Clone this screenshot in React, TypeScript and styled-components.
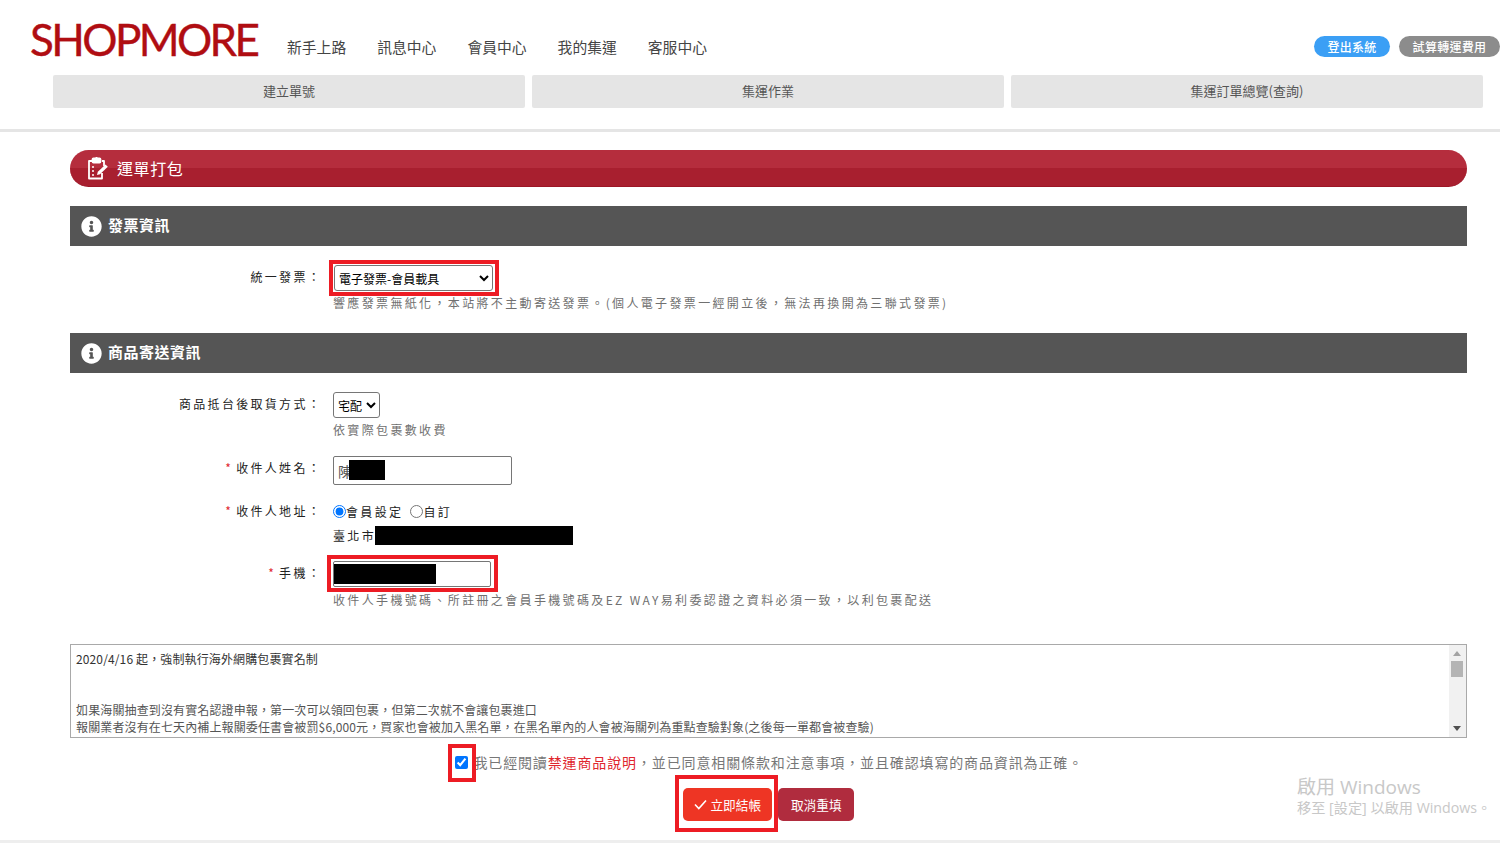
import React from "react";
import styled, { createGlobalStyle } from "styled-components";
import { FaInfoCircle } from "react-icons/fa";

const CJK = `"Noto Sans CJK TC", "Liberation Sans", sans-serif`;

const GlobalStyle = createGlobalStyle`
  html, body {
    margin: 0;
    background: #fff;
    overflow: hidden;
  }
  body {
    font-family: ${CJK};
  }
  * {
    box-sizing: border-box;
  }
`;

const navItems = ["新手上路", "訊息中心", "會員中心", "我的集運", "客服中心"];
const tabs = ["建立單號", "集運作業", "集運訂單總覽(查詢)"];

const ClipboardIcon = () => (
  <svg width="22" height="24" viewBox="0 0 22 24" fill="none" stroke="#fff" strokeWidth="1.8">
    <path d="M15 5H17V10M15 17V22.5H2V5H5" strokeLinejoin="round" />
    <rect x="5.5" y="2.5" width="8" height="4" rx="1" fill="#fff" />
    <path d="M9.5 1V3" />
    <path d="M5 11H7M5 15H7M5 19H7" strokeWidth="1.3" />
    <path d="M10 19L10.8 15.8L18.5 8.5L20.8 10.8L13 18.2Z" fill="#fff" stroke="none" />
  </svg>
);

const CheckIcon = () => (
  <svg width="13" height="11" viewBox="0 0 13 11" fill="none" stroke="#fff" strokeWidth="1.6">
    <path d="M1 5.5L4.8 9.5L12 1.5" />
  </svg>
);

export default function App() {
  return (
    <Page>
      <GlobalStyle />
      <Header>
        <TopRow>
          <Logo>SHOPMORE</Logo>
          <Nav>
            {navItems.map((item) => (
              <NavLink key={item}>{item}</NavLink>
            ))}
          </Nav>
          <Pills>
            <Pill $color="#3b9ff5" $width={76}>登出系統</Pill>
            <Pill $color="#8c8c8c" $width={101}>試算轉運費用</Pill>
          </Pills>
        </TopRow>
        <Tabs>
          {tabs.map((tab) => (
            <Tab key={tab}>{tab}</Tab>
          ))}
        </Tabs>
      </Header>

      <Content>
        <TitleBar>
          <ClipboardIcon />
          <TitleText>運單打包</TitleText>
        </TitleBar>

        <SectionHeader>
          <FaInfoCircle size={21} color="#fff" />
          <SectionTitle>發票資訊</SectionTitle>
        </SectionHeader>
        <Form $after={21}>
          <Row>
            <Label>統一發票：</Label>
            <Field>
              <InvoiceMark $inset="-5px -6px -5px -5px">
                <Select $width={159} defaultValue="member">
                  <option value="member">電子發票-會員載具</option>
                </Select>
              </InvoiceMark>
              <Hint>響應發票無紙化，本站將不主動寄送發票。(個人電子發票一經開立後，無法再換開為三聯式發票)</Hint>
            </Field>
          </Row>
        </Form>

        <SectionHeader>
          <FaInfoCircle size={21} color="#fff" />
          <SectionTitle>商品寄送資訊</SectionTitle>
        </SectionHeader>
        <Form $after={0}>
          <Row>
            <Label>商品抵台後取貨方式：</Label>
            <Field>
              <Select $width={47} defaultValue="home">
                <option value="home">宅配</option>
              </Select>
              <Hint>依實際包裹數收費</Hint>
            </Field>
          </Row>
          <Row>
            <Label><Required>*</Required>收件人姓名：</Label>
            <Field>
              <InputWrap>
                <TextInput $width={179} $height={29} defaultValue="陳" />
                <Redacted $left={16} $top={4} $width={36} $height={20} />
              </InputWrap>
            </Field>
          </Row>
          <Row>
            <Label $flush><Required>*</Required>收件人地址：</Label>
            <Field>
              <RadioRow>
                <RadioLabel><input type="radio" name="addr" defaultChecked />會員設定</RadioLabel>
                <RadioLabel><input type="radio" name="addr" />自訂</RadioLabel>
              </RadioRow>
              <Address>
                臺北市<AddressBlock />
              </Address>
            </Field>
          </Row>
          <Row>
            <Label><Required>*</Required>手機：</Label>
            <Field>
              <Highlight $inset="-6px -7px -5px -6px">
                <InputWrap>
                  <TextInput $width={158} $height={26} defaultValue="" />
                  <Redacted $left={1} $top={3} $width={102} $height={20} />
                </InputWrap>
              </Highlight>
              <PhoneHint>收件人手機號碼、所註冊之會員手機號碼及EZ WAY易利委認證之資料必須一致，以利包裹配送</PhoneHint>
            </Field>
          </Row>
        </Form>

        <Notice>
          <NoticeText>
            <p>2020/4/16 起，強制執行海外網購包裹實名制</p>
            <p>&nbsp;</p>
            <p>&nbsp;</p>
            <p>如果海關抽查到沒有實名認證申報，第一次可以領回包裹，但第二次就不會讓包裹進口</p>
            <p>報關業者沒有在七天內補上報關委任書會被罰$6,000元，買家也會被加入黑名單，在黑名單內的人會被海關列為重點查驗對象(之後每一單都會被查驗)</p>
          </NoticeText>
          <Scrollbar>
            <ArrowUp />
            <Thumb />
            <ArrowDown />
          </Scrollbar>
        </Notice>

        <Agreement>
          <Highlight $inset="-12px -8px -13px -7px">
            <Checkbox type="checkbox" defaultChecked />
          </Highlight>
          <AgreementText>
            我已經閱讀<RedLink>禁運商品說明</RedLink>，並已同意相關條款和注意事項，並且確認填寫的商品資訊為正確。
          </AgreementText>
        </Agreement>

        <Actions>
          <Highlight $inset="-13px -6px -11px -8px">
            <ActionButton $color="#ee3524" $width={89}>
              <CheckIcon />
              立即結帳
            </ActionButton>
          </Highlight>
          <ActionButton $color="#b02c3e" $width={76}>取消重填</ActionButton>
        </Actions>
      </Content>

      <Watermark>
        <WatermarkTitle>啟用 Windows</WatermarkTitle>
        <WatermarkSub>移至 [設定] 以啟用 Windows。</WatermarkSub>
      </Watermark>
    </Page>
  );
}

const Page = styled.div`
  position: relative;
  width: 1500px;
  height: 843px;
  overflow: hidden;
  border-bottom: 3px solid #eeeeee;
`;

const Header = styled.header`
  height: 132px;
  border-bottom: 3px solid #e5e5e5;
`;

const TopRow = styled.div`
  display: flex;
  align-items: flex-start;
  height: 75px;
  padding-left: 30px;
`;

const Logo = styled.div`
  width: 229px;
  margin-top: 12px;
  font-family: "Lato", "Liberation Sans", sans-serif;
  font-size: 44px;
  line-height: 54px;
  letter-spacing: -2.6px;
  color: #b00d12;
  -webkit-text-stroke: 0.4px #b00d12;
  white-space: nowrap;
`;

const Nav = styled.nav`
  display: flex;
  gap: 31px;
  margin: 36px 0 0 28px;
`;

const NavLink = styled.a`
  font-size: 14.8px;
  line-height: 22px;
  color: #444;
`;

const Pills = styled.div`
  display: flex;
  gap: 9px;
  margin: 36px 0 0 auto;
`;

const Pill = styled.a<{ $color: string; $width: number }>`
  display: flex;
  align-items: center;
  justify-content: center;
  width: ${(p) => p.$width}px;
  height: 21px;
  border-radius: 11px;
  background: ${(p) => p.$color};
  color: #fff;
  font-size: 12px;
  font-weight: 500;
  letter-spacing: 0.3px;
`;

const Tabs = styled.div`
  display: grid;
  grid-template-columns: repeat(3, 1fr);
  gap: 7px;
  padding: 0 17px 0 53px;
`;

const Tab = styled.a`
  display: flex;
  align-items: center;
  justify-content: center;
  height: 33px;
  padding-bottom: 2px;
  border-radius: 2px;
  background: #e5e5e5;
  color: #555;
  font-size: 13px;
`;

const Content = styled.main`
  padding: 18px 33.5px 0 70px;
`;

const TitleBar = styled.div`
  display: flex;
  align-items: center;
  gap: 8px;
  height: 37px;
  margin-bottom: 19px;
  padding-left: 17px;
  border-radius: 19px;
  background: linear-gradient(#b52d3d 0 50%, #a81f2f 50% 100%);
  border-bottom: 1px solid #9c1626;
`;

const TitleText = styled.h1`
  margin: 0;
  font-size: 16px;
  font-weight: 400;
  letter-spacing: 0.6px;
  color: #fff;
`;

const SectionHeader = styled.div`
  display: flex;
  align-items: center;
  gap: 6px;
  height: 40px;
  padding-left: 11px;
  background: #555;
`;

const SectionTitle = styled.h2`
  margin: 0 0 4px;
  font-size: 15px;
  font-weight: 700;
  letter-spacing: 0.5px;
  color: #fff;
`;

const Form = styled.div<{ $after: number }>`
  display: flex;
  flex-direction: column;
  gap: 17px;
  padding: 19px 0 ${(p) => p.$after}px;
`;

const Row = styled.div`
  display: grid;
  grid-template-columns: 263px 1fr;
  align-items: start;
`;

const Label = styled.label<{ $flush?: boolean }>`
  padding: ${(p) => (p.$flush ? 0 : 3)}px 11px 0 0;
  text-align: right;
  font-size: 12px;
  line-height: 18px;
  letter-spacing: 2.3px;
  color: #222;
`;

const Required = styled.span`
  margin-right: 3px;
  color: #e0282e;
`;

const Field = styled.div`
  display: flex;
  flex-direction: column;
  align-items: flex-start;
`;

const Highlight = styled.div<{ $inset: string }>`
  position: relative;
  display: inline-flex;
  &::after {
    content: "";
    position: absolute;
    inset: ${(p) => p.$inset};
    border: 4px solid #ed1c24;
    pointer-events: none;
  }
`;

const InvoiceMark = styled(Highlight)`
  margin-left: 1px;
`;

const Select = styled.select<{ $width: number }>`
  width: ${(p) => p.$width}px;
  height: 26px;
  padding: 0;
  border: 1px solid #767676;
  border-radius: 3px;
  background: #fff;
  color: #000;
  font-family: ${CJK};
  font-size: 12px;
`;

const Hint = styled.p`
  margin: 3px 0 0;
  font-size: 12px;
  line-height: 18px;
  letter-spacing: 2.35px;
  color: #707070;
  white-space: nowrap;
`;

const PhoneHint = styled(Hint)`
  margin-top: 4px;
`;

const InputWrap = styled.div`
  position: relative;
  display: inline-flex;
`;

const TextInput = styled.input<{ $width: number; $height: number }>`
  width: ${(p) => p.$width}px;
  height: ${(p) => p.$height}px;
  padding: 0 4px;
  border: 1px solid #767676;
  border-radius: 2px;
  font-family: ${CJK};
  font-size: 14px;
  color: #555;
  outline: none;
`;

const Redacted = styled.span<{ $left: number; $top: number; $width: number; $height: number }>`
  position: absolute;
  left: ${(p) => p.$left}px;
  top: ${(p) => p.$top}px;
  width: ${(p) => p.$width}px;
  height: ${(p) => p.$height}px;
  background: #000;
`;

const RadioRow = styled.div`
  display: flex;
  gap: 7px;
  height: 18px;
  align-items: center;
`;

const RadioLabel = styled.label`
  display: flex;
  align-items: center;
  font-size: 12px;
  letter-spacing: 2.35px;
  color: #222;
  input {
    margin: 0;
    width: 13px;
    height: 13px;
  }
`;

const Address = styled.div`
  display: flex;
  align-items: center;
  height: 18px;
  margin-top: 6px;
  font-size: 12px;
  letter-spacing: 2.35px;
  color: #222;
`;

const AddressBlock = styled.span`
  width: 198px;
  height: 19px;
  margin-left: -1px;
  background: #000;
`;

const Notice = styled.div`
  display: flex;
  justify-content: space-between;
  height: 94px;
  margin-top: 35px;
  border: 1px solid #a9a9a9;
  overflow: hidden;
`;

const NoticeText = styled.div`
  padding: 5px 0 0 5px;
  font-family: "Noto Sans CJK TC", "Open Sans", sans-serif;
  font-size: 12px;
  line-height: 17.1px;
  letter-spacing: 0.13px;
  color: #555;
  p {
    margin: 0;
    white-space: nowrap;
  }
  p:first-child {
    color: #333;
  }
`;

const Scrollbar = styled.div`
  display: flex;
  flex-direction: column;
  align-items: center;
  width: 17px;
  padding: 6px 0 6px;
  background: #f1f1f1;
`;

const ArrowUp = styled.span`
  border: 4px solid transparent;
  border-top: 0;
  border-bottom: 5px solid #a3a3a3;
`;

const Thumb = styled.span`
  width: 12px;
  height: 16px;
  margin-top: 5px;
  background: #b4b4b4;
`;

const ArrowDown = styled.span`
  margin-top: auto;
  border: 4px solid transparent;
  border-bottom: 0;
  border-top: 5px solid #505050;
`;

const Agreement = styled.div`
  display: flex;
  align-items: center;
  justify-content: center;
  height: 24px;
  margin: 12px 0 0 2px;
`;

const Checkbox = styled.input`
  width: 13px;
  height: 13px;
  margin: 0;
  accent-color: #0075ff;
`;

const AgreementText = styled.span`
  margin-left: 5px;
  font-size: 14px;
  letter-spacing: 0.87px;
  color: #777;
  white-space: nowrap;
`;

const RedLink = styled.a`
  color: #e0262e;
`;

const Actions = styled.div`
  display: flex;
  justify-content: center;
  gap: 6px;
  margin-top: 14px;
  padding-left: 1px;
`;

const ActionButton = styled.button<{ $color: string; $width: number }>`
  display: flex;
  align-items: center;
  justify-content: center;
  gap: 3px;
  width: ${(p) => p.$width}px;
  height: 33px;
  padding: 0;
  border: 0;
  border-radius: 5px;
  background: ${(p) => p.$color};
  color: #fff;
  font-family: ${CJK};
  font-size: 12.7px;
`;

const Watermark = styled.div`
  position: absolute;
  left: 1297px;
  top: 775px;
  color: #c8c8c8;
  font-family: "Open Sans", "Noto Sans CJK TC", sans-serif;
  white-space: nowrap;
`;

const WatermarkTitle = styled.div`
  font-size: 19px;
  line-height: 24px;
`;

const WatermarkSub = styled.div`
  font-size: 14.2px;
  line-height: 18px;
`;
